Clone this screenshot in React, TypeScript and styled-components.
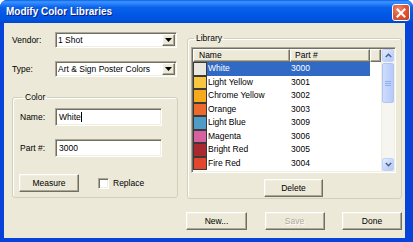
import React from "react";
import styled, { createGlobalStyle, css } from "styled-components";

interface LibraryColor {
  name: string;
  part: string;
  color: string;
}

const colors: LibraryColor[] = [
  { name: "White", part: "3000", color: "#E9E7E0" },
  { name: "Light Yellow", part: "3001", color: "#F9C63F" },
  { name: "Chrome Yellow", part: "3002", color: "#F6A91B" },
  { name: "Orange", part: "3003", color: "#EC6B2C" },
  { name: "Light Blue", part: "3009", color: "#4F9CC6" },
  { name: "Magenta", part: "3006", color: "#D9609E" },
  { name: "Bright Red", part: "3005", color: "#A82A30" },
  { name: "Fire Red", part: "3004", color: "#E2472E" },
];

const App: React.FC = () => {
  return (
    <>
      <GlobalStyle />
      <Window>
        <TitleBar>
          <Title>Modify Color Libraries</Title>
          <CloseButton>
            <svg width="10" height="10" viewBox="0 0 10 10">
              <path d="M1.5 1.5L8.5 8.5M8.5 1.5L1.5 8.5" stroke="#fff" strokeWidth="2" strokeLinecap="square" />
            </svg>
          </CloseButton>
        </TitleBar>

        <Body>
          <Top>
            <LeftColumn>
              <FieldRow>
                <Label width={43}>Vendor:</Label>
                <Combo>
                  <ComboValue>1 Shot</ComboValue>
                  <DropButton>
                    <svg width="7" height="4" viewBox="0 0 7 4">
                      <path d="M0 0H7L3.5 4Z" fill="#000" />
                    </svg>
                  </DropButton>
                </Combo>
              </FieldRow>
              <FieldRow $gap={13}>
                <Label width={43}>Type:</Label>
                <Combo>
                  <ComboValue>Art &amp; Sign Poster Colors</ComboValue>
                  <DropButton>
                    <svg width="7" height="4" viewBox="0 0 7 4">
                      <path d="M0 0H7L3.5 4Z" fill="#000" />
                    </svg>
                  </DropButton>
                </Combo>
              </FieldRow>

              <ColorGroup>
                <Legend>Color</Legend>
                <EditRow>
                  <Label width={35}>Name:</Label>
                  <TextBox>
                    White
                    <Caret />
                  </TextBox>
                </EditRow>
                <EditRow $gap={13}>
                  <Label width={35}>Part #:</Label>
                  <TextBox>3000</TextBox>
                </EditRow>
                <ActionRow>
                  <Button width={60}>Measure</Button>
                  <CheckLabel>
                    <CheckBox />
                    Replace
                  </CheckLabel>
                </ActionRow>
              </ColorGroup>
            </LeftColumn>

            <LibraryGroup>
              <Legend>Library</Legend>
              <ListView>
                <ListMain>
                  <Header>
                    <HeaderCell width={97} $pad={6}>Name</HeaderCell>
                    <HeaderCell width={80} $pad={5}>Part #</HeaderCell>
                    <HeaderCell width={11} $pad={0} />
                  </Header>
                  {colors.map((c, i) => (
                    <Row key={c.part}>
                      <Swatch color={c.color} />
                      <RowBody $selected={i === 0}>
                        <NameCell>{c.name}</NameCell>
                        <PartCell>{c.part}</PartCell>
                      </RowBody>
                    </Row>
                  ))}
                </ListMain>
                <ScrollBar>
                  <ScrollButton>
                    <svg width="7" height="5" viewBox="0 0 7 5">
                      <path d="M0.8 4L3.5 1.3L6.2 4" stroke="#4D6185" strokeWidth="1.5" fill="none" />
                    </svg>
                  </ScrollButton>
                  <Thumb>
                    <svg width="6" height="5" viewBox="0 0 6 5">
                      <path d="M0 0.5H6M0 2.5H6M0 4.5H6" stroke="#8FAEF0" strokeWidth="1" />
                    </svg>
                  </Thumb>
                  <Track />
                  <ScrollButton>
                    <svg width="7" height="5" viewBox="0 0 7 5">
                      <path d="M0.8 1L3.5 3.7L6.2 1" stroke="#4D6185" strokeWidth="1.5" fill="none" />
                    </svg>
                  </ScrollButton>
                </ScrollBar>
              </ListView>
              <DeleteRow>
                <Button width={59}>Delete</Button>
              </DeleteRow>
            </LibraryGroup>
          </Top>

          <ButtonBar>
            <Button width={61}>New...</Button>
            <Button width={60} disabled>
              Save
            </Button>
            <Button width={60}>Done</Button>
          </ButtonBar>
        </Body>
      </Window>
    </>
  );
};

export default App;

const GlobalStyle = createGlobalStyle`
  html, body {
    margin: 0;
    padding: 0;
    background: #ffffff;
  }
  body {
    font-family: "Liberation Sans", Arial, sans-serif;
    font-size: 8.5px;
    color: #000;
  }
  * {
    box-sizing: border-box;
  }
`;

// classic 3D edges
const sunken = css`
  border: 1px solid;
  border-color: #aca899 #ffffff #ffffff #aca899;
  box-shadow: inset 1px 1px #716f64, inset -1px -1px #f1efe2;
`;

const raised = css`
  border: 1px solid;
  border-color: #ffffff #716f64 #716f64 #ffffff;
  box-shadow: inset -1px -1px #aca899, inset 1px 1px #f1efe2;
  background: #ece9d8;
`;

const Window = styled.div`
  width: 413px;
  height: 242px;
  display: flex;
  flex-direction: column;
  background: #0843d9;
  border-radius: 7px 7px 0 0;
  overflow: hidden;
`;

const TitleBar = styled.div`
  height: 23px;
  flex-shrink: 0;
  display: flex;
  align-items: flex-start;
  justify-content: space-between;
  padding: 0 3px 0 6px;
  background: linear-gradient(
    to bottom,
    #0a5fe6 0%,
    #3d95ff 8%,
    #2a84fa 16%,
    #0b62ea 32%,
    #0058e6 60%,
    #0053df 85%,
    #0047cc 100%
  );
`;

const Title = styled.span`
  margin-top: 6px;
  font-family: "Liberation Sans", Arial, sans-serif;
  font-weight: bold;
  font-size: 10px;
  line-height: 12px;
  color: #ffffff;
  text-shadow: 1px 1px #0a1e80;
`;

const CloseButton = styled.div`
  margin-top: 4px;
  width: 18px;
  height: 17px;
  border: 1px solid #ffffff;
  border-radius: 3px;
  background: radial-gradient(circle at 35% 30%, #f08a6c 0%, #e0593a 45%, #c63c1e 100%);
  display: flex;
  align-items: center;
  justify-content: center;
`;

const Body = styled.div`
  flex: 1;
  display: flex;
  flex-direction: column;
  background: #ece9d8;
  margin: 0 8px 4px 4px;
  padding: 9px 3px 0 8px;
`;

const Top = styled.div`
  display: flex;
  gap: 9px;
`;

const LeftColumn = styled.div`
  width: 166px;
  display: flex;
  flex-direction: column;
`;

const FieldRow = styled.div<{ $gap?: number }>`
  display: flex;
  align-items: center;
  height: 16px;
  margin-top: ${({ $gap }) => $gap ?? 0}px;
`;

const Label = styled.span<{ width: number }>`
  width: ${({ width }) => width}px;
  flex-shrink: 0;
  line-height: 10px;
`;

const Combo = styled.div`
  ${sunken};
  width: 122px;
  height: 16px;
  padding: 1px;
  display: flex;
  background: #ffffff;
`;

const ComboValue = styled.span`
  flex: 1;
  padding-left: 1px;
  line-height: 12px;
  white-space: nowrap;
`;

const DropButton = styled.div`
  ${raised};
  width: 13px;
  height: 12px;
  display: flex;
  align-items: center;
  justify-content: center;
`;

const GroupBox = styled.fieldset`
  margin: 0;
  min-width: 0;
  border: 1px solid #d0d0bf;
  border-radius: 3px;
  box-shadow: inset 1px 1px #ffffff;
`;

const Legend = styled.legend`
  margin-left: 3px;
  padding: 0 2px;
  line-height: 10px;
  color: #000;
`;

const ColorGroup = styled(GroupBox)`
  margin-top: 15px;
  width: 166px;
  padding: 6px 0 5px 7px;
`;

const EditRow = styled.div<{ $gap?: number }>`
  display: flex;
  align-items: center;
  height: 18px;
  margin-top: ${({ $gap }) => $gap ?? 0}px;
`;

const TextBox = styled.div`
  ${sunken};
  width: 107px;
  height: 18px;
  padding: 1px 3px;
  background: #ffffff;
  display: flex;
  align-items: center;
  line-height: 12px;
`;

const Caret = styled.span`
  width: 1px;
  height: 10px;
  background: #000;
`;

const ActionRow = styled.div`
  display: flex;
  align-items: center;
  margin-top: 17px;
  margin-left: -1px;
  gap: 19px;
`;

const Button = styled.div<{ width: number; disabled?: boolean }>`
  ${raised};
  width: ${({ width }) => width}px;
  height: 18px;
  display: flex;
  align-items: center;
  justify-content: center;
  line-height: 10px;
  color: ${({ disabled }) => (disabled ? "#aca899" : "#000")};
  text-shadow: ${({ disabled }) => (disabled ? "1px 1px #ffffff" : "none")};
`;

const CheckLabel = styled.label`
  display: flex;
  align-items: center;
  gap: 4px;
  line-height: 10px;
`;

const CheckBox = styled.span`
  ${sunken};
  width: 11px;
  height: 11px;
  background: #ffffff;
`;

const LibraryGroup = styled(GroupBox)`
  margin-top: 1px;
  width: 215px;
  padding: 4px 5px 1px 3px;
  display: flex;
  flex-direction: column;
`;

const ListView = styled.div`
  ${sunken};
  height: 126px;
  padding: 1px;
  display: flex;
  background: #ffffff;
`;

const ListMain = styled.div`
  flex: 1;
  display: flex;
  flex-direction: column;
  overflow: hidden;
`;

const Header = styled.div`
  display: flex;
  height: 13px;
  flex-shrink: 0;
`;

const HeaderCell = styled.div<{ width: number; $pad: number }>`
  ${raised};
  width: ${({ width }) => width}px;
  padding-left: ${({ $pad }) => $pad - 1}px;
  line-height: 11px;
  white-space: nowrap;
`;

const Row = styled.div`
  display: flex;
  height: 13.5px;
  flex-shrink: 0;
`;

const Swatch = styled.span<{ color: string }>`
  width: 14px;
  border: 1px solid #3a3a3a;
  background: ${({ color }) => color};
`;

const RowBody = styled.div<{ $selected: boolean }>`
  display: flex;
  width: 163px;
  background: ${({ $selected }) => ($selected ? "#316ac5" : "transparent")};
  color: ${({ $selected }) => ($selected ? "#ffffff" : "#000000")};
  line-height: 13.5px;
  white-space: nowrap;
`;

const NameCell = styled.span`
  width: 83px;
  padding-left: 1px;
`;

const PartCell = styled.span`
  width: 80px;
  padding-left: 1px;
`;

const ScrollBar = styled.div`
  width: 13px;
  display: flex;
  flex-direction: column;
  background: #f6f5ef;
  border-left: 1px solid #eeede5;
`;

const ScrollButton = styled.div`
  height: 13px;
  flex-shrink: 0;
  border: 1px solid #c2d3fb;
  border-radius: 2px;
  background: linear-gradient(135deg, #e4ecfe 0%, #c3d5fd 60%, #b4c8f6 100%);
  display: flex;
  align-items: center;
  justify-content: center;
`;

const Thumb = styled.div`
  height: 40px;
  margin-top: 1px;
  border: 1px solid #b1c5f5;
  border-radius: 2px;
  background: linear-gradient(to right, #cfdcfd 0%, #c2d3fc 50%, #b6caf8 100%);
  display: flex;
  align-items: center;
  justify-content: center;
`;

const Track = styled.div`
  flex: 1;
`;

const DeleteRow = styled.div`
  display: flex;
  justify-content: center;
  margin-top: 6px;
`;

const ButtonBar = styled.div`
  display: flex;
  justify-content: flex-end;
  gap: 17.5px;
  margin-top: 13px;
`;
